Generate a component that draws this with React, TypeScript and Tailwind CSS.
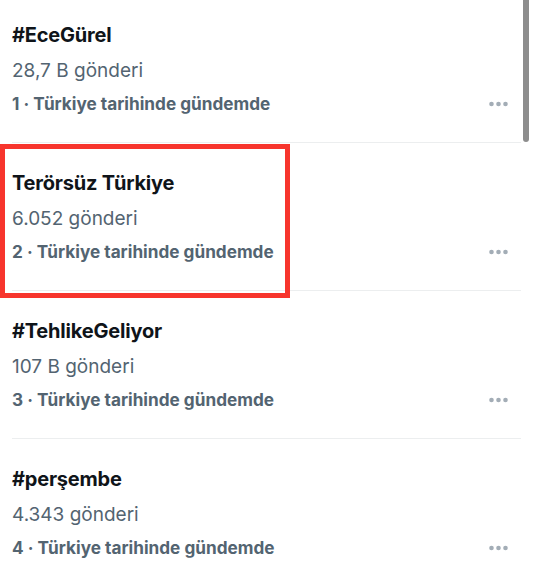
const trends = [
  { title: '#EceGürel', posts: '28,7 B gönderi', rank: 1 },
  { title: 'Terörsüz Türkiye', posts: '6.052 gönderi', rank: 2 },
  { title: '#TehlikeGeliyor', posts: '107 B gönderi', rank: 3 },
  { title: '#perşembe', posts: '4.343 gönderi', rank: 4 },
];

function Dots() {
  return (
    <svg width="20" height="6" viewBox="0 0 20 6" className="shrink-0">
      <circle cx="2.5" cy="3" r="2.3" fill="#a3adb6" />
      <circle cx="9.5" cy="3" r="2.3" fill="#a3adb6" />
      <circle cx="16.5" cy="3" r="2.3" fill="#a3adb6" />
    </svg>
  );
}

function TrendRow({ title, posts, rank }: { title: string; posts: string; rank: number }) {
  return (
    <div className="flex items-end border-b border-[#eceeef] pt-[28px] pb-[27px]">
      <div className="flex flex-1 flex-col">
        <div className="text-[20px] leading-[24px] font-bold text-[#0f1419] tracking-[-0.2px]">{title}</div>
        <div className="mt-3 text-[19px] leading-[24px] text-[#536471]">{posts}</div>
        <div className="mt-[10px] text-[17.2px] leading-[22px] font-bold text-[#536471]">
          {rank} · Türkiye tarihinde gündemde
        </div>
      </div>
      <div className="mr-3 mb-[8px]">
        <Dots />
      </div>
    </div>
  );
}

export default function App() {
  return (
    <div
      className="relative h-[585px] w-[533px] overflow-hidden bg-white"
      style={{ fontFamily: 'Inter, "Noto Sans", sans-serif' }}
    >
      <div className="-mt-[5px] px-3">
        {trends.map((t) => (
          <TrendRow key={t.rank} {...t} />
        ))}
      </div>

      {/* scroll indicator */}
      <div className="absolute top-0 right-[4px] h-[142px] w-[6px] rounded-b-full bg-[#8d8d8d]" />

      {/* highlight box */}
      <div className="absolute top-[144px] left-0 h-[154px] w-[290px] border-[5px] border-[#f7352d]" />
    </div>
  );
}
